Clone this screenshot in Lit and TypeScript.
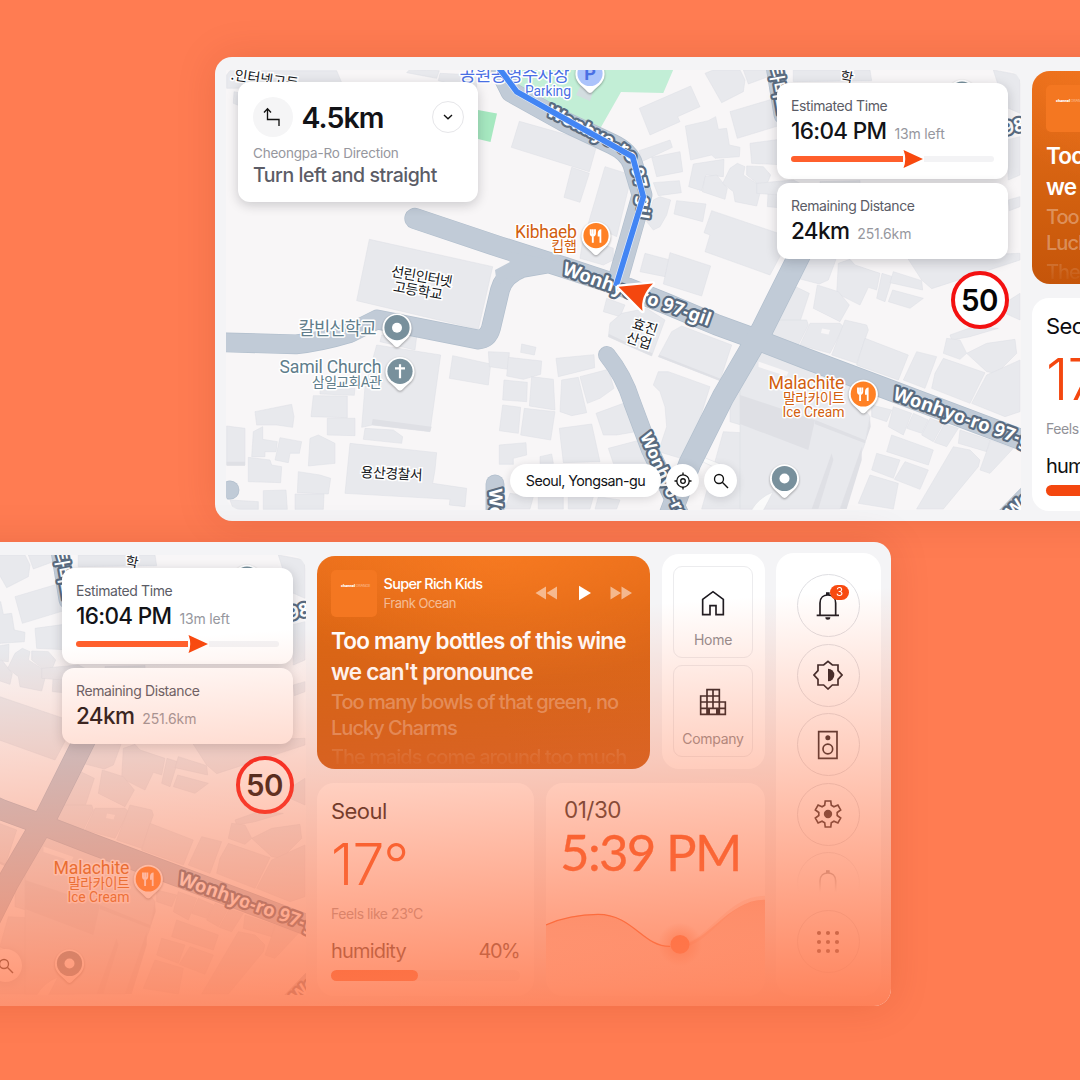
import { LitElement, html, svg, css } from "lit";
import { customElement, property } from "lit/decorators.js";

/* Building footprints, grouped by map tile. Tile units are thirds of a map pixel. */
interface Tile {
  x: number;
  y: number;
  shapes: string[];
}

const TILES: Tile[] = [
  {
    x: 210,
    y: 50,
    shapes: [
      "50,75 60,62 380,62 400,110 50,115",
      "72,125 95,130 95,170 70,160",
      "600,58 688,62 680,85 590,68",
      "690,70 800,75 800,120 685,92",
      "478,568 848,650 805,838 440,752",
    ],
  },
  {
    x: 450,
    y: 60,
    shapes: [
      "208,184 442,250 418,335 184,262",
      "365,322 418,340 390,427 342,412",
      "465,320 545,345 500,530 415,490",
      "400,530 490,565 490,600 460,615 390,595",
      "568,145 722,78 750,140 683,170 690,185 600,225",
      "765,40 790,30 870,30 885,60 880,95 815,128",
      "880,30 950,30 955,50 895,72",
      "840,155 975,115 1010,190 862,235",
      "706,198 775,182 797,170 805,208 830,205 838,255 870,262 868,290 795,295 785,285 722,300",
      "568,272 660,240 667,262 575,305",
      "605,292 690,275 698,335 620,350",
      "610,368 688,362 694,398 625,407",
      "730,312 822,298 820,350 768,345 755,392 716,380",
      "765,350 800,345 832,385 825,418 757,395",
      "840,325 862,310 885,320 880,345 935,380 920,438 855,425 850,395 818,370",
      "890,318 940,320 962,345 945,388 890,345",
      "900,250 1010,235 1010,315 905,310",
      "680,422 768,432 758,485 672,462",
      "630,410 662,420 650,465 630,500 610,510 590,485 610,420",
      "785,452 1000,525 1000,570 960,645 765,575 780,525 762,518",
      "585,580 660,600 645,650 570,635",
      "660,578 782,618 755,708 640,672",
      "955,380 1010,385 1010,445 952,440",
      "470,715 525,735 510,770 460,755",
    ],
  },
  {
    x: 760,
    y: 60,
    shapes: [
      "100,30 330,30 335,62 100,65",
      "700,30 780,45 780,160 735,140",
      "740,240 780,230 780,345 745,360",
      "-10,370 100,360 140,380 120,410 -10,400",
      "180,365 300,362 300,372 180,372",
      "745,420 780,410 780,440 748,452",
      "440,590 780,580 780,600 515,686 485,660",
      "150,590 228,598 205,660 178,672 112,655",
      "235,610 270,598 285,615 360,640 350,690 325,682 300,735 230,700",
      "90,672 148,700 105,830 50,785",
      "172,675 235,695 268,735 240,785 160,745",
      "366,640 398,650 375,725 350,715",
      "400,635 485,662 488,690 390,668",
      "398,690 490,715 450,745 385,725",
      "725,735 780,700 780,780 735,760",
    ],
  },
  {
    x: 220,
    y: 270,
    shapes: [
      "105,425 215,403 222,440 218,472 170,465 110,465",
      "20,468 75,475 75,585 20,585",
      "100,485 128,470 128,508 172,515 168,545 135,545 135,560 95,560",
      "180,503 245,515 238,550 210,550 205,578 165,570",
      "85,562 150,570 155,585 185,590 182,638 85,635",
      "235,605 300,615 332,625 325,672 232,668",
      "130,662 198,660 202,718 130,718",
      "225,672 312,672 310,718 225,718",
      "30,690 115,695 115,718 40,718",
      "270,505 295,495 345,520 345,580 265,588",
      "300,360 405,355 403,376 300,372",
      "280,377 382,378 382,443 273,440",
      "322,445 405,445 405,497 322,495",
      "485,195 590,200 585,240 480,215",
      "470,225 662,255 630,485 458,465 425,472 435,350",
      "435,475 520,480 548,500 545,520 430,508",
      "390,520 650,548 645,600 638,640 740,655 735,710 688,705 690,688 375,670",
      "698,257 812,282 805,345 688,325",
      "805,245 868,248 865,298 808,290",
      "905,222 948,232 943,255 902,247",
    ],
  },
  {
    x: 490,
    y: 320,
    shapes: [
      "55,112 155,123 152,163 100,178 50,168",
      "198,115 312,104 314,143 205,170",
      "42,180 112,187 110,245 38,240",
      "125,170 190,178 195,270 118,258",
      "215,180 265,172 290,278 245,287 210,275",
      "270,170 355,148 372,205 330,235 292,250",
      "38,255 92,262 85,340 28,332",
      "103,265 195,275 182,360 92,345",
      "318,280 400,250 438,335 380,345 340,345",
      "208,325 305,312 330,425 220,428",
      "28,375 108,368 110,405 70,415 70,433 28,433",
      "355,385 450,360 480,430 370,430",
      "150,410 185,402 190,430 150,430",
      "145,520 220,520 220,567 145,567",
      "235,520 310,530 300,567 235,567",
      "60,520 130,530 120,567 45,567",
      "325,530 390,540 380,567 315,567",
      "360,10 395,-20 470,-35 525,0 485,108 410,75 355,50",
      "545,35 575,18 725,75 690,182 505,110",
      "505,155 535,155 660,200 590,420 505,395 530,320 525,260 510,215 490,195",
      "700,335 780,340 900,380 900,567 635,567",
      "795,85 900,120 900,360 720,305 720,240",
    ],
  },
  {
    x: 740,
    y: 320,
    shapes: [
      "120,0 200,0 205,15 175,75 100,45 85,30",
      "210,10 300,10 310,20 270,100 180,75",
      "315,0 380,15 385,30 350,130 275,105",
      "375,55 505,105 475,180 350,135",
      "530,95 590,110 555,205 490,180",
      "610,115 735,158 690,250 575,205 585,160",
      "630,45 700,20 775,25 690,50 635,60",
      "620,55 660,60 680,100 660,118 610,100",
      "680,100 740,70 825,58 830,100 770,160 740,155",
      "740,165 840,120 840,275 795,290 695,250",
      "45,85 335,190 330,210 390,290 375,370 300,567 0,567 0,195 30,100",
      "395,255 455,270 440,305 395,290",
      "460,260 515,280 490,345 445,320",
      "520,280 565,300 545,340 500,325",
      "570,295 610,310 580,365 545,345",
      "613,312 655,325 620,380 583,367",
      "455,345 580,390 565,435 440,395",
      "410,400 480,420 460,475 395,450",
      "495,425 565,450 540,508 463,478",
      "390,465 475,490 460,567 355,550",
      "640,380 690,390 720,420 715,440 610,567 530,567",
      "660,330 750,360 740,395 655,370",
      "752,360 820,385 750,460 720,450",
    ],
  },
];

/* Extruded sides of the taller buildings. */
const SHADED: Tile[] = [
  { x: 220, y: 270, shapes: ["458,447 635,470 630,485 455,465", "20,575 75,575 75,587 20,587"] },
  {
    x: 740,
    y: 320,
    shapes: ["0,225 225,300 205,390 0,312", "275,400 280,420 235,567 215,567", "365,380 365,420 320,567 300,567", "390,290 392,320 375,370", "226,300 375,360 375,370 224,312"],
  },
  { x: 490, y: 320, shapes: ["505,110 690,182 692,176 508,104", "355,50 410,75 485,108 487,100 412,68 357,42"] },
];

const ROADS: { d: string; w: number }[] = [
  { d: "M415 218.500L500 247L563 267L627 288L667 304L717 325L750 337L807 359L887 389L1030 443", w: 20.5 },
  { d: "M220 342.300L296 344.300Q320 342 350 333L377 319.500L410 326L478 339.500Q488 339 491 328L500 290Q504 275 522 268L545 264", w: 19 },
  { d: "M806 242L797 260L762 330L723 397L690 463L668 520", w: 22 },
  { d: "M607 355Q624 376 632 402L650 450L683 520", w: 17 },
  { d: "M494 58L511 92L563 121L612 144Q629 152 633 165L642 195L617 283", w: 20 },
  { d: "M774 60L783 115", w: 18 },
  { d: "M495 484V520", w: 18 },
  { d: "M998 524L1040 481", w: 17 },
  { d: "M230 490V490.100", w: 18 },
];

@customElement("street-map")
export class StreetMap extends LitElement {
  static styles = css`
    :host {
      display: block;
      width: 100%;
      height: 100%;
    }
    .map {
      display: block;
      width: 100%;
      height: 100%;
    }
    .ground {
      fill: #f8f6f7;
    }
    .building {
      fill: #e8e9ed;
      stroke: #dcdfe4;
      stroke-width: 1.5;
    }
    .side {
      fill: #dfe0e5;
    }
    .casing,
    .road {
      fill: none;
      stroke-linecap: round;
      stroke-linejoin: round;
    }
    .casing {
      stroke: #b2bfcd;
    }
    .road {
      stroke: #c1cbd7;
    }
    .name {
      font: 700 18.5px "Noto Sans", "Open Sans", sans-serif;
      fill: #fff;
      stroke: #596b80;
      stroke-width: 4.5px;
      stroke-linejoin: round;
      paint-order: stroke;
    }
    .narrow {
      font-size: 17px;
    }
    .poi {
      font-family: Roboto, "Noto Sans CJK KR", sans-serif;
      stroke: #fff;
      stroke-width: 3px;
      stroke-linejoin: round;
      paint-order: stroke;
      text-anchor: end;
    }
    .big {
      font-size: 17.7px;
    }
    .small {
      font-size: 14px;
    }
    .food {
      fill: #d2600f;
    }
    .civic {
      fill: #607d8b;
    }
    .park {
      fill: #4a70e4;
    }
    .place {
      font: 400 14px "Noto Sans CJK KR", sans-serif;
      fill: #15171a;
      stroke: #fff;
      stroke-width: 3px;
      paint-order: stroke;
      text-anchor: middle;
    }
    .pin {
      fill: #fff;
      filter: drop-shadow(0 1px 1px rgba(0, 0, 0, 0.35));
    }
    .route-edge,
    .route {
      fill: none;
      stroke-linejoin: round;
    }
    .route-edge {
      stroke: #dfe9fb;
      stroke-width: 7;
    }
    .route {
      stroke: #4285f4;
      stroke-width: 5.600;
    }
  `;

  private tile(t: Tile, cls: string) {
    return svg`<g transform="translate(${t.x} ${t.y}) scale(.33333)">
      ${t.shapes.map((p) => svg`<polygon class=${cls} points=${p}></polygon>`)}
    </g>`;
  }

  private pin(x: number, y: number, color: string, glyph: unknown) {
    return svg`<g transform="translate(${x} ${y})">
      <path class="pin" d="M0 19.500C-2 19.500-4 16-9.500 11.500A14.600 14.600 0 1 1 9.500 11.500C4 16 2 19.500 0 19.500Z"></path>
      <circle r="12.600" fill=${color}></circle>${glyph}
    </g>`;
  }

  render() {
    const dot = svg`<circle r="5" fill="#fff"></circle>`;
    const cross = svg`<path d="M0-7V7M-5-3H5" stroke="#fff" stroke-width="2.200"></path>`;
    const fork = svg`<path d="M-5.300-6.500V-2.500Q-5.300 0-3.200 0T-1-2.500V-6.500M-3.200-6.500V7" fill="none" stroke="#fff" stroke-width="1.900"></path><path d="M1.700.8V-2Q1.700-6.500 5.300-6.500V7H3.500V.8Z" fill="#fff"></path>`;
    const p = svg`<text y="6" text-anchor="middle" font-family="Roboto" font-weight="700" font-size="18" fill="#4a70e4">P</text>`;
    return html`<svg class="map" viewBox="226 70 794.500 439.500" preserveAspectRatio="none">
      <defs>
        <path id="curve" d="M546 115L590 137L617 150Q628 157 631 168L639 200L633 240" />
      </defs>
      <rect class="ground" x="220" y="60" width="810" height="460"></rect>
      ${TILES.map((t) => this.tile(t, "building"))} ${SHADED.map((t) => this.tile(t, "side"))}
      <polygon points="500,68 674,68 663.300,93 621,92 600.500,128 560,109 517,90" fill="#c2eed6"></polygon>
      <polygon points="478,110 497,113.500 490.500,142 478,139" fill="#a6e8c0"></polygon>
      <polygon points="581,85 594,88 590,101 576,95" fill="#d3dde0"></polygon>
      <polygon points="758.500,361.500 788.500,372 786.500,376 758.500,367" fill="#f8f6f7"></polygon>
      <polygon points="822,328.500 830,330 828.500,334.500 821,333" fill="#f8f6f7"></polygon>
      <path d="M751 511Q758 498 773 492Q768 502 763 511ZM703 457L720 464L716 468L703 462Z" fill="#fafafa" stroke="#dcdfe4" stroke-width=".5"></path>
      ${ROADS.map((r) => svg`<path class="casing" d=${r.d} stroke-width=${r.w + 0.8}></path>`)}
      ${ROADS.map((r) => svg`<path class="road" d=${r.d} stroke-width=${r.w - 0.6}></path>`)}
      <polygon points="500,250 563,262 545,272 510,277 497,285 495,270 510,262" fill="#c1cbd7"></polygon>

      <text class="name narrow"><textPath href="#curve" textLength="153">Wonhyo-ro 97-gil</textPath></text>
      <text class="name" transform="translate(561.500 274) rotate(19.500)" textLength="156">Wonhyo-ro 97-gil</text>
      <text class="name" transform="translate(892 399) rotate(19.500)" textLength="157">Wonhyo-ro 97-gil</text>
      <text class="name narrow" transform="rotate(66 640 436)" x="640" y="436">Wonhyo-ro</text>
      <text class="name" transform="translate(489 489) rotate(88)">Wonhyo</text>
      <text class="name narrow" transform="translate(1013 518) rotate(-45)">Won</text>
      <text class="name narrow" transform="translate(770 66) rotate(80)">타버드</text>
      <text class="name" transform="translate(1005 135) rotate(-14)">98</text>

      <text class="poi big park" x="569.500" y="81" textLength="110">공원공영주차장</text>
      <text class="poi small park" x="571" y="96" textLength="46">Parking</text>
      ${this.pin(590, 73.500, "#abc3fb", p)} ${this.pin(962, 94, "#78909c", dot)}

      <path class="route-edge" d="M496 64L516.700 91.700L632.700 156.700L643.300 196.700L616 286"></path>
      <path class="route" d="M496 64L516.700 91.700L632.700 156.700L643.300 196.700L616 286"></path>
      <path
        d="M618.500 286.800L653 283.500Q640 296 642.500 311Z"
        fill="#f4470f"
        stroke="#fff"
        stroke-width="4.500"
        stroke-linejoin="round"
        paint-order="stroke"
      ></path>

      <text class="place" transform="translate(264 84) rotate(8)">.인터넷고등</text>
      <text class="place" transform="translate(846 82) rotate(10)">학</text>
      <text class="place" transform="translate(421 281.500) rotate(10)" textLength="62">선린인터넷</text>
      <text class="place" transform="translate(417 295.500) rotate(10)" textLength="50">고등학교</text>
      <text class="place" transform="translate(391.500 478.500) rotate(3)" textLength="62">용산경찰서</text>
      <text class="place" transform="translate(643.500 331.500) rotate(18)">효진</text>
      <text class="place" transform="translate(637.500 345.500) rotate(18)">산업</text>

      <text class="poi big food" x="577" y="237.500" textLength="62">Kibhaeb</text>
      <text class="poi small food" x="577" y="251">킵햅</text>
      ${this.pin(596, 235.700, "#ff8125", fork)}
      <text class="poi big food" x="844.500" y="389" textLength="76">Malachite</text>
      <text class="poi small food" x="845" y="403" textLength="62">말라카이트</text>
      <text class="poi small food" x="844.500" y="417" textLength="62">Ice Cream</text>
      ${this.pin(863.300, 394, "#ff8125", fork)}
      <text class="poi big civic" x="376.500" y="335" textLength="78">칼빈신학교</text>
      ${this.pin(397, 327.700, "#78909c", dot)}
      <text class="poi big civic" x="381.500" y="373" textLength="102">Samil Church</text>
      <text class="poi small civic" x="382" y="387" textLength="70">삼일교회A관</text>
      ${this.pin(400, 371.300, "#78909c", cross)} ${this.pin(784.500, 478.500, "#78909c", dot)}
    </svg>`;
  }
}

/* Icons are drawn on a 90-unit square. */
const gearPath = (() => {
  const pts: string[] = [];
  for (let k = 0; k < 6; k++) {
    const a = (k * Math.PI) / 3 - Math.PI / 2;
    for (const [r, o] of [
      [28, -0.36],
      [40, -0.21],
      [40, 0.21],
      [28, 0.36],
    ]) {
      pts.push(`${(45 + r * Math.cos(a + o)).toFixed(1)},${(45 + r * Math.sin(a + o)).toFixed(1)}`);
    }
  }
  return pts.join(" ");
})();

const ICONS: Record<string, unknown> = {
  home: svg`<path d="M14 34L45 11L76 34V80H54V53H36V80H14Z"></path>`,
  company: svg`<path d="M27 8H64V45H82V82H8V27H27ZM45 8V64M27 27V82M64 45V82M27 27H64M8 45H64M8 64H82"></path><path class="solid" d="M27 64H36V82H27ZM54 64H64V82H54Z"></path>`,
  bell: svg`<path d="M21 73V36C21 19 33 12 44.500 12S68 19 68 36V73M11 73H78"></path><path class="solid" d="M39 4H50V12H39ZM37 79H52A7.500 7.500 0 0 1 37 79Z"></path>`,
  bright: svg`<path d="M45 4L58 15H75V32L87 45L75 58V75H58L45 87L32 75H15V58L3 45L15 32V15H32Z"></path><path class="solid" d="M45 26A19 19 0 0 1 45 64Z"></path>`,
  speaker: svg`<path d="M17 5H72V85H17Z"></path><circle class="solid" cx="44.500" cy="23" r="7.500"></circle><circle cx="44.500" cy="57" r="14.500"></circle>`,
  gear: svg`<polygon points=${gearPath}></polygon><circle class="solid" cx="45" cy="45" r="12.500"></circle>`,
  grid: svg`${[18, 45, 72].map((y) => [18, 45, 72].map((x) => svg`<circle class="solid" cx=${x} cy=${y} r="6.200"></circle>`))}`,
};

const glyph = (name: string) => html`<svg class="glyph" viewBox="0 0 90 90">${ICONS[name]}</svg>`;

@customElement("nav-dashboard")
export class NavDashboard extends LitElement {
  @property({ type: Boolean }) faded = false;

  static styles = css`
    :host {
      display: block;
      position: relative;
      width: 1391px;
      height: 464px;
      border-radius: 17px;
      background: #f4f4f6;
      box-shadow: 0 0 40px rgba(120, 30, 0, 0.14);
      overflow: hidden;
      font-family: Inter, "Liberation Sans", sans-serif;
      color: #121317;
    }
    .board {
      box-sizing: border-box;
      height: 100%;
      display: flex;
      padding: 13px 10px 11px 11px;
    }
    .map-area {
      position: relative;
      width: 794.5px;
      height: 439.5px;
      border-radius: 0 16px 0 16px;
      overflow: hidden;
    }
    .veil {
      position: absolute;
      inset: 0;
      background: linear-gradient(176deg, rgba(255, 124, 82, 0) 142px, rgb(255, 124, 82) 577px);
    }
    .card {
      box-sizing: border-box;
      background: #fff;
      border-radius: 12px;
      box-shadow: 0 3px 12px rgba(20, 20, 30, 0.2);
      white-space: nowrap;
    }
    .turn {
      position: absolute;
      left: 12px;
      top: 12px;
      width: 240px;
      height: 120px;
      padding: 15px 14px 0 15px;
    }
    .turn-head {
      display: flex;
      align-items: center;
      height: 40px;
    }
    .turn-icon {
      width: 40px;
      height: 40px;
      border-radius: 50%;
      background: #f5f5f6;
      display: grid;
      place-items: center;
    }
    .line {
      fill: none;
      stroke: #111;
      stroke-width: 1.35;
    }
    .turn-dist {
      flex: 1;
      margin-left: 8.5px;
      font-size: 28.5px;
      font-weight: 600;
      letter-spacing: -0.95px;
    }
    .more {
      box-sizing: border-box;
      width: 32px;
      height: 32px;
      border-radius: 50%;
      border: 1px solid #e6e6e9;
      display: grid;
      place-items: center;
    }
    .turn-road {
      margin-top: 6px;
      font-size: 13.5px;
      line-height: 20px;
      letter-spacing: -0.2px;
      color: #96979e;
    }
    .turn-text {
      font-size: 19.5px;
      line-height: 25px;
      letter-spacing: -0.45px;
      font-weight: 500;
      color: #5b5c66;
    }
    .trip {
      position: absolute;
      top: 13px;
      right: 12.5px;
      width: 231px;
      display: flex;
      flex-direction: column;
      gap: 4px;
    }
    .stat {
      height: 76px;
      padding: 13px 14px 0 14px;
    }
    .stat.tall {
      height: 96px;
    }
    .stat-label {
      font-size: 14px;
      line-height: 20px;
      letter-spacing: -0.4px;
      color: #5b5c66;
    }
    .stat-row {
      display: flex;
      align-items: baseline;
      gap: 8px;
      line-height: 29px;
    }
    .stat-value {
      font-size: 22.5px;
      font-weight: 500;
      letter-spacing: -0.65px;
    }
    .stat-note {
      font-size: 14px;
      letter-spacing: -0.15px;
      color: #96979e;
    }
    .progress {
      display: flex;
      align-items: center;
      height: 20px;
      margin-top: 1px;
    }
    .done {
      width: 112px;
      height: 6px;
      border-radius: 3px 0 0 3px;
      background: #ff5f2c;
    }
    .left {
      flex: 1;
      height: 6px;
      border-radius: 0 3px 3px 0;
      background: #f3f3f5;
    }
    .limit {
      box-sizing: border-box;
      align-self: flex-end;
      width: 58px;
      height: 58px;
      margin: 8px -0.5px 0 0;
      border: 4.5px solid #f31111;
      border-radius: 50%;
      background: #fff;
      display: grid;
      place-items: center;
      font-size: 29.5px;
      font-weight: 600;
      letter-spacing: -0.5px;
      color: #050505;
    }
    .tools {
      position: absolute;
      left: 284px;
      bottom: 12.5px;
      display: flex;
      gap: 5px;
    }
    .tool {
      box-sizing: border-box;
      width: 33px;
      height: 33px;
      border-radius: 17px;
      background: #fff;
      display: grid;
      place-items: center;
      box-shadow: 0 2px 10px rgba(20, 20, 30, 0.14);
      font-size: 14.3px;
      letter-spacing: -0.53px;
      white-space: nowrap;
    }
    .tool.wide {
      width: 151px;
    }
    .center {
      width: 448px;
      margin: 0.5px 0 0 11.5px;
      display: grid;
      grid-template-columns: 217px 104px 103px;
      grid-template-rows: 213.5px 213px;
      column-gap: 12px;
      row-gap: 13.5px;
    }
    .music {
      box-sizing: border-box;
      grid-column: 1 / 3;
      border-radius: 18px;
      padding: 14px 14px 0 14px;
      overflow: hidden;
      white-space: nowrap;
      color: #fff;
      background: radial-gradient(75% 60% at 55% 0%, rgba(255, 128, 36, 0.6), rgba(255, 128, 36, 0)),
        linear-gradient(#e96e1b, #d2600f 60%, #c5550a);
    }
    .song {
      display: flex;
      align-items: center;
      height: 47px;
    }
    .cover {
      box-sizing: border-box;
      width: 46px;
      height: 47px;
      border-radius: 5px;
      background: #f47721;
      padding: 14px 0 0 10px;
      font-size: 3.6px;
      line-height: 4px;
      letter-spacing: -0.1px;
      color: rgba(255, 255, 255, 0.55);
    }
    .cover-bold {
      font-weight: 900;
      color: #fff;
    }
    .meta {
      flex: 1;
      margin-left: 6.5px;
    }
    .song-title {
      font-size: 14.5px;
      line-height: 20px;
      font-weight: 500;
      letter-spacing: -0.72px;
    }
    .artist {
      font-size: 13px;
      line-height: 18px;
      letter-spacing: -0.5px;
      color: rgba(255, 255, 255, 0.55);
    }
    .controls {
      width: 98px;
      height: 16px;
      margin-right: 3px;
    }
    .lyric {
      margin-top: 9.5px;
      font-size: 22.5px;
      line-height: 30.5px;
      font-weight: 600;
      letter-spacing: -0.78px;
    }
    .next {
      margin-top: 2px;
      font-size: 20px;
      line-height: 26px;
      font-weight: 500;
      letter-spacing: -0.98px;
      color: rgba(255, 255, 255, 0.33);
    }
    .later {
      margin-top: 3px;
      font-size: 20px;
      line-height: 26px;
      font-weight: 500;
      letter-spacing: -1px;
      background: linear-gradient(rgba(255, 255, 255, 0.18), rgba(255, 255, 255, 0.03) 85%);
      -webkit-background-clip: text;
      background-clip: text;
      color: transparent;
    }
    .places {
      box-sizing: border-box;
      margin-top: -1.5px;
      height: 214.5px;
      border-radius: 17px;
      background: #fff;
      padding: 11.5px 12px 0 11px;
      display: flex;
      flex-direction: column;
      gap: 7px;
    }
    .place {
      box-sizing: border-box;
      height: 92px;
      border: 1px solid #ececee;
      border-radius: 9px;
      display: flex;
      flex-direction: column;
      align-items: center;
      padding-top: 21.5px;
      font-size: 14px;
      letter-spacing: -0.3px;
      color: #8e8c90;
    }
    .place .glyph {
      margin-bottom: 12.5px;
    }
    .glyph {
      width: 30px;
      height: 30px;
      fill: none;
      stroke: #1d1a20;
      stroke-width: 5;
    }
    .solid {
      fill: #1d1a20;
      stroke: none;
    }
    .weather {
      box-sizing: border-box;
      border-radius: 17px;
      background: #fff;
      padding: 14px 14px 0 14px;
      display: flex;
      flex-direction: column;
    }
    .city {
      font-size: 22px;
      line-height: 28px;
      letter-spacing: -0.55px;
      color: #0c0c0f;
    }
    .degrees {
      font-size: 57px;
      line-height: 60px;
      margin-top: 10.5px;
      font-weight: 300;
      letter-spacing: -1px;
      color: #f4470f;
    }
    .feels {
      margin-top: 9px;
      font-size: 14px;
      line-height: 20px;
      letter-spacing: -0.45px;
      color: #929298;
    }
    .humid {
      margin-top: 12.5px;
      display: flex;
      justify-content: space-between;
      font-size: 20px;
      line-height: 28px;
      letter-spacing: -0.8px;
      color: #111;
    }
    .percent {
      letter-spacing: -1.6px;
      margin-right: 1px;
    }
    .meter {
      margin-top: 5.5px;
      height: 11px;
      border-radius: 6px;
      background: #f1f1f3;
    }
    .meter-fill {
      height: 11px;
      border-radius: 6px;
      background: #f4470f;
    }
    .clock {
      grid-column: 2 / 4;
      border-radius: 17px;
      background: #fff;
      overflow: hidden;
      display: flex;
      flex-direction: column;
    }
    .date {
      margin: 13px 0 0 18px;
      font-size: 22.5px;
      line-height: 28px;
      letter-spacing: -0.5px;
      color: #222;
    }
    .time {
      margin: 0 0 0 14px;
      font: 400 51px / 56px Lato, sans-serif;
      letter-spacing: -1.7px;
      color: #f4470f;
      -webkit-text-stroke: 0.3px #f4470f;
      white-space: nowrap;
    }
    .chart {
      margin-top: auto;
      display: block;
      width: 219px;
      height: 117px;
    }
    .side {
      box-sizing: border-box;
      width: 105px;
      height: 443px;
      margin: -2px 0 0 11px;
      border-radius: 18px;
      background: #fff;
      padding-top: 21px;
      display: flex;
      flex-direction: column;
      align-items: center;
    }
    .list {
      height: 320px;
      display: flex;
      flex-direction: column;
      gap: 6.6px;
      overflow: hidden;
      -webkit-mask-image: linear-gradient(#000 268px, transparent 318px);
      mask-image: linear-gradient(#000 268px, transparent 318px);
    }
    .round {
      position: relative;
      box-sizing: border-box;
      flex: none;
      width: 63px;
      height: 63px;
      border: 1px solid #dedee2;
      border-radius: 50%;
      display: grid;
      place-items: center;
    }
    .round .glyph {
      margin-right: 1px;
    }
    .apps {
      margin-top: 16px;
    }
    .badge {
      position: absolute;
      left: 32px;
      top: 10px;
      width: 19px;
      height: 15px;
      border-radius: 8px;
      background: #f84a10;
      color: #fff;
      font-size: 11.5px;
      line-height: 15px;
      text-align: center;
    }
  `;

  private stat(label: string, value: string, note: string, bar = false) {
    return html`<div class="card stat ${bar ? "tall" : ""}">
      <div class="stat-label">${label}</div>
      <div class="stat-row"><span class="stat-value">${value}</span><span class="stat-note">${note}</span></div>
      ${bar
        ? html`<div class="progress">
            <div class="done"></div>
            <svg width="21" height="20" viewBox="0 0 21 20"><path d="M.5 1L20 10L.5 19Q4 10 .5 1Z" fill="#f8490f" /></svg>
            <div class="left"></div>
          </div>`
        : null}
    </div>`;
  }

  render() {
    return html`
      <div class="board">
        <div class="map-area">
          <street-map></street-map>
          <div class="card turn">
            <div class="turn-head">
              <div class="turn-icon">
                <svg width="20" height="20" viewBox="0 0 20 20"><path class="line" d="M4.500 1.500V12.500H16V19M1 5.500L4.500 1.800L8 5.500" /></svg>
              </div>
              <div class="turn-dist">4.5km</div>
              <div class="more">
                <svg width="10" height="8" viewBox="0 0 10 8"><path class="line" d="M1 2L5 5.800L9 2" /></svg>
              </div>
            </div>
            <div class="turn-road">Cheongpa-Ro Direction</div>
            <div class="turn-text">Turn left and straight</div>
          </div>
          <div class="trip">
            ${this.stat("Estimated Time", "16:04 PM", "13m left", true)} ${this.stat("Remaining Distance", "24km", "251.6km")}
            <div class="limit">50</div>
          </div>
          <div class="tools">
            <div class="tool wide">Seoul, Yongsan-gu</div>
            <div class="tool">
              <svg width="18" height="18" viewBox="0 0 18 18">
                <g class="line"><circle cx="9" cy="9" r="6.200" /><circle cx="9" cy="9" r="2.300" /><path d="M9 .5V3M9 15V17.500M.5 9H3M15 9H17.500" /></g>
              </svg>
            </div>
            <div class="tool">
              <svg width="16" height="16" viewBox="0 0 16 16"><g class="line"><circle cx="6" cy="6" r="4.500" /><path d="M9.300 9.300L15 15" /></g></svg>
            </div>
          </div>
        </div>

        <div class="center">
          <div class="music">
            <div class="song">
              <div class="cover"><span class="cover-bold">channel</span> ORANGE</div>
              <div class="meta">
                <div class="song-title">Super Rich Kids</div>
                <div class="artist">Frank Ocean</div>
              </div>
              <svg class="controls" viewBox="0 0 98 16">
                <path d="M11 1.500V14.500L.5 8ZM22 1.500V14.500L11.500 8ZM75.500 1.500V14.500L86 8ZM86.500 1.500V14.500L97 8Z" fill="#fff" opacity=".5" />
                <path d="M44 .8V15.200L56 8Z" fill="#fff" />
              </svg>
            </div>
            <div class="lyric">Too many bottles of this wine<br />we can't pronounce</div>
            <div class="next">Too many bowls of that green, no<br />Lucky Charms</div>
            <div class="later">The maids come around too much</div>
          </div>
          <div class="places">
            <div class="place">${glyph("home")}Home</div>
            <div class="place">${glyph("company")}Company</div>
          </div>
          <div class="weather">
            <div class="city">Seoul</div>
            <div class="degrees">17°</div>
            <div class="feels">Feels like 23°C</div>
            <div class="humid"><span>humidity</span><span class="percent">40%</span></div>
            <div class="meter"><div class="meter-fill" style="width:46%"></div></div>
          </div>
          <div class="clock">
            <div class="date">01/30</div>
            <div class="time">5:39 PM</div>
            <svg class="chart" viewBox="19 312 657 351" preserveAspectRatio="none">
              <defs>
                <linearGradient id="area" x1="0" y1="0" x2="0" y2="1">
                  <stop offset="0" stop-color="#f4470f" stop-opacity=".42" />
                  <stop offset=".9" stop-color="#f4470f" stop-opacity="0" />
                </linearGradient>
                <radialGradient id="halo">
                  <stop offset=".3" stop-color="#f4470f" stop-opacity=".4" />
                  <stop offset="1" stop-color="#f4470f" stop-opacity="0" />
                </radialGradient>
              </defs>
              <path d="M19 448C70 425 120 416 175 416C280 416 310 515 392 513C500 520 560 370 676 372V663H19Z" fill="url(#area)" />
              <path d="M421 511C510 505 560 366 676 366" fill="none" stroke="#f4470f" stroke-opacity=".12" stroke-width="12" />
              <path d="M19 448C70 425 120 416 175 416C280 416 310 515 392 513" fill="none" stroke="#f4470f" stroke-width="4" />
              <circle cx="421" cy="507" r="66" fill="url(#halo)" />
              <circle cx="421" cy="507" r="28.500" fill="#ff5a26" />
            </svg>
          </div>
        </div>

        <div class="side">
          <div class="list">
            <div class="round">${glyph("bell")}<div class="badge">3</div></div>
            <div class="round">${glyph("bright")}</div>
            <div class="round">${glyph("speaker")}</div>
            <div class="round">${glyph("gear")}</div>
            <div class="round">${glyph("bell")}</div>
          </div>
          <div class="round apps">${glyph("grid")}</div>
        </div>
      </div>
      ${this.faded ? html`<div class="veil"></div>` : null}
    `;
  }
}

@customElement("app-root")
export class AppRoot extends LitElement {
  static styles = css`
    :host {
      display: block;
      width: 1080px;
      height: 1080px;
      overflow: hidden;
      background: #ff7c52;
    }
    .stage {
      box-sizing: border-box;
      width: 1080px;
      height: 1080px;
      padding-top: 57px;
      display: flex;
      flex-direction: column;
      gap: 21px;
      overflow: hidden;
    }
    .upper {
      flex: none;
      margin-left: 215px;
    }
    .lower {
      flex: none;
      margin-left: -500px;
    }
  `;

  render() {
    return html`<div class="stage">
      <nav-dashboard class="upper"></nav-dashboard>
      <nav-dashboard class="lower" faded></nav-dashboard>
    </div>`;
  }
}
